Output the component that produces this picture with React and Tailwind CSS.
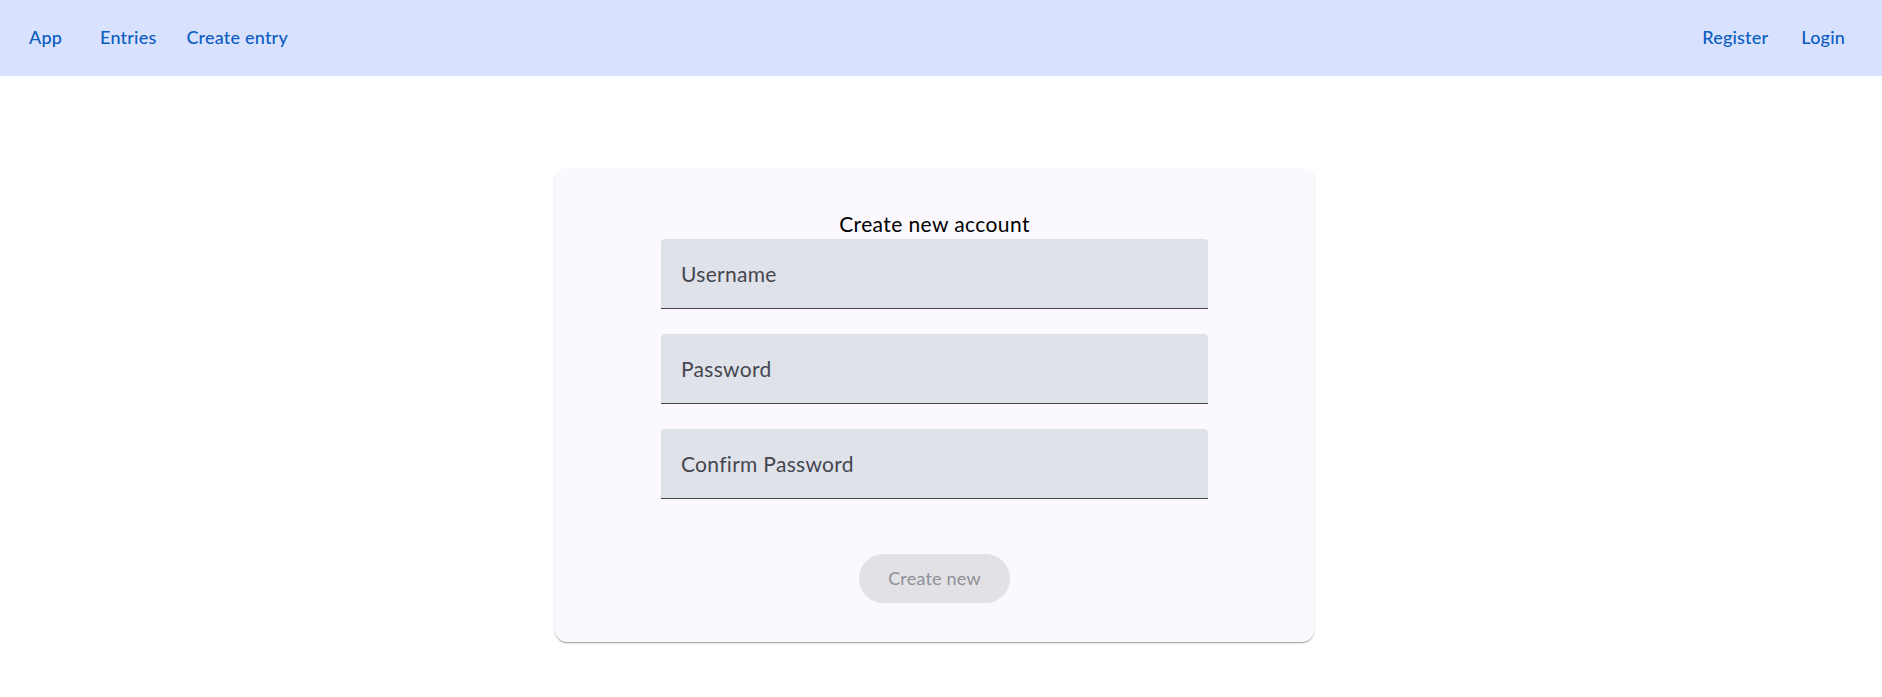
import React from 'react';

const NavLink = ({ children, className = '' }) => (
  <a className={`text-[18px] font-medium tracking-[0.2px] text-[#0b5cbf] cursor-pointer ${className}`}>{children}</a>
);

const Field = ({ label }) => (
  <div className="h-[70px] w-[547px] bg-[#e0e2ea] rounded-t-[4px] border-b border-[#44464f] flex items-center px-[20px]">
    <span className="text-[21px] tracking-[0.3px] text-[#45464f] pt-[1px]">{label}</span>
  </div>
);

export default function App() {
  return (
    <div className="min-h-[697px] bg-white" style={{ fontFamily: 'Lato, "Noto Sans", sans-serif' }}>
      <nav className="h-[76px] bg-[#d8e2ff] flex items-center justify-between pl-[29px] pr-[37px] pb-[2px]">
        <div className="flex items-center">
          <NavLink>App</NavLink>
          <NavLink className="ml-[38px]">Entries</NavLink>
          <NavLink className="ml-[30px]">Create entry</NavLink>
        </div>
        <div className="flex items-center">
          <NavLink>Register</NavLink>
          <NavLink className="ml-[33px]">Login</NavLink>
        </div>
      </nav>

      <div className="flex justify-center pt-[93px] pr-[13px]">
        <div className="w-[759px] h-[473px] bg-[#fbf9fe] rounded-[12px] shadow-[0_2px_1px_-1px_rgba(0,0,0,0.2),0_1px_1px_0_rgba(0,0,0,0.14),0_1px_3px_0_rgba(0,0,0,0.12)] flex flex-col items-center pt-[40px]">
          <h2 className="text-[21px] tracking-[0.4px] leading-[29px] text-black">Create new account</h2>
          <div className="flex flex-col gap-[25px] mt-[1px]">
            <Field label="Username" />
            <Field label="Password" />
            <Field label="Confirm Password" />
          </div>
          <button className="mt-[55px] h-[49px] w-[151px] rounded-full bg-[#e1e1e6] text-[18px] tracking-[0.2px] text-[#8f8f96]">
            Create new
          </button>
        </div>
      </div>
    </div>
  );
}
